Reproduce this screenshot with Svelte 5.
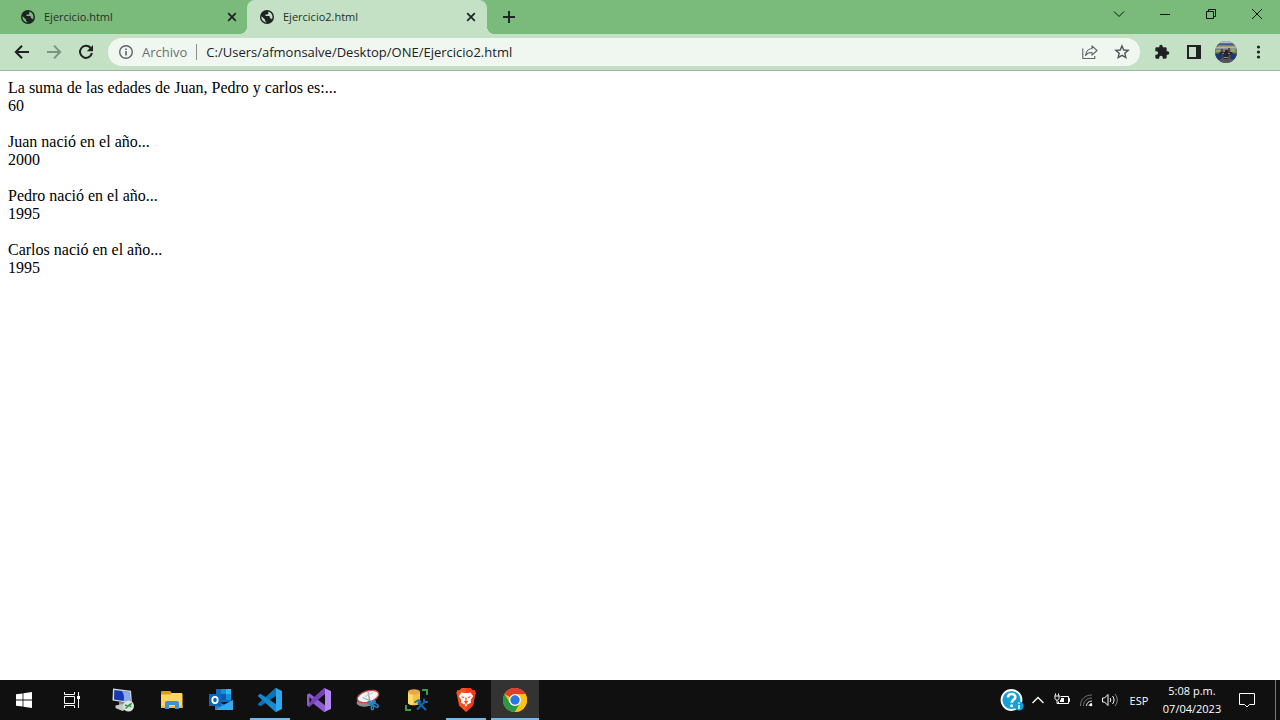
<script>
  const tabs = [
    { title: 'Ejercicio.html', active: false },
    { title: 'Ejercicio2.html', active: true }
  ];
  const results = [
    { label: 'La suma de las edades de Juan, Pedro y carlos es:...', value: 60 },
    { label: 'Juan nació en el año...', value: 2000 },
    { label: 'Pedro nació en el año...', value: 1995 },
    { label: 'Carlos nació en el año...', value: 1995 }
  ];
  let url = $state('C:/Users/afmonsalve/Desktop/ONE/Ejercicio2.html');
</script>

<div class="screen">
  <header class="titlebar">
    <nav class="tabs" aria-label="Pestañas">
      {#each tabs as tab}
        <div class="tab" class:active={tab.active}>
          <svg class="favicon" viewBox="0 0 16 16" width="16" height="16" aria-hidden="true">
            <circle cx="8" cy="8" r="7" fill="#202124" />
            <path
              d="M9.300 2.600c2.500.6 4.200 2.800 4.200 5.400 0 .9-.2 1.700-.6 2.400-.3-.7-.9-1.100-1.600-1.100h-.5V8c0-.6-.4-1-1-1H6.500V5.500H8c.7 0 1.300-.6 1.300-1.300zM2.600 7.300l3.400 3.300v.6c0 .8.5 1.400 1.300 1.400v.9C4.500 13.100 2.400 10.800 2.400 8z"
              fill={tab.active ? '#c5e1c5' : '#7aba7b'}
            />
          </svg>
          <a class="tab-title" href="#app">{tab.title}</a>
          <button class="tab-close" aria-label="Cerrar pestaña">
            <svg viewBox="0 0 16 16" width="16" height="16">
              <path d="M4.200 4.200l7.600 7.600M11.800 4.200l-7.600 7.600" stroke="#202124" stroke-width="1.700" />
            </svg>
          </button>
        </div>
      {/each}
      <button class="new-tab" aria-label="Nueva pestaña">
        <svg viewBox="0 0 16 16" width="16" height="16">
          <path d="M8 2v12M2 8h12" stroke="#202124" stroke-width="1.900" />
        </svg>
      </button>
    </nav>
    <div class="window-controls">
      <button aria-label="Buscar pestañas">
        <svg viewBox="0 0 12 12" width="12" height="12"><path d="M1 3.500l5 5 5-5" /></svg>
      </button>
      <button aria-label="Minimizar">
        <svg viewBox="0 0 12 12" width="12" height="12"><path d="M1 6.500h10" /></svg>
      </button>
      <button aria-label="Restaurar">
        <svg viewBox="0 0 12 12" width="12" height="12"><path d="M1.500 3.500h7v7h-7zM3.500 3.500v-2h7v7h-2" /></svg>
      </button>
      <button aria-label="Cerrar">
        <svg viewBox="0 0 12 12" width="12" height="12"><path d="M1 1l10 10M11 1L1 11" /></svg>
      </button>
    </div>
  </header>

  <div class="toolbar">
    <button class="tool" aria-label="Atrás">
      <svg viewBox="0 0 16 16" width="16" height="16"><path d="M15 8H2.500M8 1.700L1.800 8 8 14.300" fill="none" stroke="#202124" stroke-width="2" /></svg>
    </button>
    <button class="tool" aria-label="Adelante">
      <svg viewBox="0 0 16 16" width="16" height="16"><path d="M1 8h12.500M8 1.700L14.200 8 8 14.300" fill="none" stroke="#7f917f" stroke-width="1.900" /></svg>
    </button>
    <button class="tool" aria-label="Recargar">
      <svg viewBox="0 0 16 16" width="16" height="16">
        <path d="M12.600 4A6 6 0 1 0 13.900 9" fill="none" stroke="#202124" stroke-width="2" />
        <path d="M15 1v6.200H8.800z" fill="#202124" />
      </svg>
    </button>
    <div class="omnibox">
      <button class="site-info" aria-label="Información del sitio">
        <svg viewBox="0 0 16 16" width="16" height="16">
          <circle cx="8" cy="8" r="6.300" fill="none" stroke="#5f6368" stroke-width="1.400" />
          <path d="M8 7v4.500M8 4.400v1.600" stroke="#5f6368" stroke-width="1.600" />
        </svg>
      </button>
      <label class="scheme" for="url">Archivo</label>
      <input id="url" type="text" bind:value={url} spellcheck="false" />
      <button class="tool" aria-label="Compartir">
        <svg viewBox="0 0 16 16" width="16" height="16" fill="none" stroke="#5f6368" stroke-width="1.100">
          <path d="M.8 4.500v10h12V12" />
          <path d="M10 1.800l5 4.700-5 4.700V8.500C7 8.300 5 9.300 3.500 11.500 4 7.500 6.500 4.800 10 4.500z" stroke-linejoin="round" />
        </svg>
      </button>
      <button class="tool" aria-label="Agregar a favoritos">
        <svg viewBox="0 0 16 16" width="16" height="16">
          <path d="M8 1.900l1.750 4.100 4.450.4-3.370 2.930 1 4.350L8 11.400l-3.830 2.280 1-4.350L1.800 6.400l4.450-.4z" fill="none" stroke="#505458" stroke-width="1.400" />
        </svg>
      </button>
    </div>
    <button class="tool" aria-label="Extensiones">
      <svg viewBox="0 0 24 24" width="16" height="16">
        <path d="M20.500 11H19V7c0-1.100-.9-2-2-2h-4V3.500a2.500 2.500 0 0 0-5 0V5H4c-1.100 0-2 .9-2 2v3.800h1.500a2.700 2.700 0 0 1 0 5.400H2V20c0 1.100.9 2 2 2h3.800v-1.500a2.700 2.700 0 0 1 5.400 0V22H17c1.100 0 2-.9 2-2v-4h1.500a2.500 2.500 0 0 0 0-5z" fill="#202124" />
      </svg>
    </button>
    <button class="tool" aria-label="Panel lateral">
      <svg viewBox="0 0 16 16" width="16" height="16">
        <path d="M1 1h14v14H1z" fill="#202124" /><path d="M3 3h7v10H3z" fill="#c5e1c5" />
      </svg>
    </button>
    <button class="tool" aria-label="Perfil">
      <svg viewBox="0 0 22 22" width="22" height="22">
        <defs><clipPath id="avatar"><circle cx="11" cy="11" r="11" /></clipPath></defs>
        <g clip-path="url(#avatar)">
          <path d="M0 0h22v22H0z" fill="#565a60" />
          <path d="M0 0h22v2.500H0z" fill="#aebdd0" />
          <path d="M0 2.500h22v2H0z" fill="#3b5a9a" />
          <path d="M3 4.500h17v1.300H3z" fill="#c0a650" />
          <path d="M0 5.800h22v2H0z" fill="#a9b4c2" />
          <path d="M0 7.800h22v4H0z" fill="#77807a" />
          <path d="M1 9h4v2H1zM16 8h4v3h-4z" fill="#91a94e" />
          <path d="M6 8h2v3H6zM13 7h2v4h-2z" fill="#5b453b" />
          <path d="M0 13h6l2 3-3 3H0zM16 13h6v6h-6l-1-3z" fill="#1b3a70" />
          <path d="M5 11h5V9h3v2h4l1 2-4 1-1 4H9l-1-4-4-1z" fill="#26252c" />
          <path d="M5 18h13v4H5z" fill="#55565d" />
          <path d="M7 12h2v1H7zM13 12h2v1h-2zM9 16h4v1H9z" fill="#a98279" />
        </g>
      </svg>
    </button>
    <button class="tool" aria-label="Menú">
      <svg viewBox="0 0 16 16" width="16" height="16" fill="#202124">
        <circle cx="8.500" cy="3" r="1.600" /><circle cx="8.500" cy="8" r="1.600" /><circle cx="8.500" cy="13" r="1.600" />
      </svg>
    </button>
  </div>

  <main>
    {#each results as row}
      <p>{row.label}<br />{row.value}</p>
    {/each}
  </main>

  <footer class="taskbar">
    <button class="task" aria-label="Inicio">
      <svg viewBox="0 0 16 16" width="16" height="16" fill="#fff">
        <path d="M0 2.300l6.600-.9v6.200H0zM7.400 1.300L16 0v7.600H7.400zM0 8.400h6.600v6.200L0 13.700zM7.400 8.400H16V16l-8.600-1.200z" />
      </svg>
    </button>
    <button class="task" aria-label="Vista de tareas">
      <svg viewBox="0 0 16 16" width="16" height="16" fill="none" stroke="#fff">
        <path d="M.5 0v2.500h10V0M.5 4.500h10v7H.5zM.5 16v-2.500h10V16M14.500 0v16" />
        <path d="M13 4h3v3h-3z" fill="#fff" stroke="none" />
      </svg>
    </button>
    <div class="apps">
      <button class="task" aria-label="Escritorio remoto">
        <svg viewBox="0 0 24 24" width="24" height="24">
          <path d="M2 .5l18 2.200 1 12.800-19.500-3z" fill="#d5dad9" />
          <path d="M3.300 2l15.500 2 .7 10L3 11.500z" fill="#1638b8" />
          <path d="M11 3l7.800 1 .7 10-7-1.100C13.500 9.500 13 6.500 11 3z" fill="#8aaaf0" />
          <path d="M8 13.500l6 1v4l-6-1z" fill="#8b9190" />
          <path d="M4.500 17.500l7-1.500 3 5.500-3 1.500-7-3z" fill="#c5c9c7" />
          <circle cx="17.500" cy="18" r="5.500" fill="#e0e4df" />
          <path d="M14 17l3 1.300-2.500 2.200M20.800 15.300l-3 2 2.500 1.500" fill="none" stroke="#2f9442" stroke-width="1.500" />
        </svg>
      </button>
      <button class="task" aria-label="Explorador de archivos">
        <svg viewBox="0 0 24 24" width="24" height="24">
          <path d="M1 4.500c0-.8.400-1.500 1.200-1.500h8l1.500 2H22v3H1z" fill="#e39b0b" />
          <path d="M1 6.500h9l2-1.500h9c.8 0 1.500.500 1.500 1.300V20H1z" fill="#ffd561" />
          <path d="M1 18h21.500v2H1z" fill="#f1bf40" />
          <path d="M5 21v-6c0-1.200.7-2 2-2h10c1.200 0 2 .8 2 2v6h-4v-4H9v4z" fill="#3d91d9" />
        </svg>
      </button>
      <button class="task" aria-label="Outlook">
        <svg viewBox="0 0 24 24" width="24" height="24">
          <path d="M7 1h15v13H7z" fill="#0f6cbd" />
          <path d="M12 1h5v5h-5z" fill="#1490df" /><path d="M17 1h5v5h-5z" fill="#35b8f1" />
          <path d="M12 6h5v6h-5z" fill="#0a5ca8" /><path d="M17 6h5v6h-5z" fill="#1490df" />
          <path d="M6 12l9 4.500 9-4.500v10H6z" fill="#1a82d5" />
          <path d="M6 22h18V12z" fill="#38a9e8" />
          <path d="M0 6h12v12H0z" fill="#0868bd" />
          <ellipse cx="6" cy="12" rx="2.700" ry="3.100" fill="none" stroke="#fff" stroke-width="1.800" />
        </svg>
      </button>
      <button class="task running" aria-label="Visual Studio Code">
        <svg viewBox="0 0 24 24" width="24" height="24">
          <path d="M0 15.700L17.500 0 20 6.500 2.400 18.200 0 16.800z" fill="#0873b8" />
          <path d="M0 8.300L.2 7.300 2.400 5.800 20 17.500 17.500 24 0 8.300z" fill="#1689d1" />
          <path d="M17.200.3L18 0l6 3v18l-6 3-.8-.3.800-1.200v-21z" fill="#2ea7ed" />
        </svg>
      </button>
      <button class="task" aria-label="Visual Studio">
        <svg viewBox="0 0 24 24" width="24" height="24">
          <path d="M0 6.500l2.500-1.300L19 18v5.500L17 24 5 14.500 2.500 18.800 0 17.500zM2.500 9v6l3-3z" fill="#8e5bd0" fill-rule="evenodd" />
          <path d="M1 18.500l1.500.300L18 6V0l-1.200.300L5 11z" fill="#7542b8" />
          <path d="M17 0l7 3v18l-7 3 1-1.500v-21z" fill="#b488f3" />
        </svg>
      </button>
      <button class="task" aria-label="Recortes">
        <svg viewBox="0 0 24 24" width="24" height="24">
          <ellipse cx="10" cy="14" rx="9.500" ry="4.500" fill="#8c8c8c" transform="rotate(-8 10 14)" />
          <ellipse cx="12" cy="8.500" rx="11" ry="5.500" fill="#f5f5f5" stroke="#d24447" stroke-width="1.300" transform="rotate(-17 12 8.500)" />
          <path d="M12 4l2 10M6.500 9.500l9.500 4" fill="none" stroke="#a2a6a6" stroke-width="1.300" />
          <path d="M9 8.500l8-4" fill="none" stroke="#c2c5c5" />
          <path d="M16 15.500c-2.500-3.500-5.500-1.500-3.500.3 1.300 1.100 3.500-.3 3.500-.3s-2 6 .3 6.300c2 .2 1-4.300-.3-6.300 1.800 1.500 3.500 4.800 5.800 3.500 2-1.500-2.300-4.500-5.800-3.500 1.500-.2 4-1.300 3-2.500-1-1-2.500 1-3 2.500z" fill="none" stroke="#2385bf" stroke-width="1.500" />
        </svg>
      </button>
      <button class="task" aria-label="Herramientas de base de datos">
        <svg viewBox="0 0 24 24" width="24" height="24">
          <path d="M3 4v11c0 3 12 3 12 0V4z" fill="#f6c33b" />
          <path d="M3 4v11c0 1 2 1.800 5 2.200V5z" fill="#ffdd62" />
          <ellipse cx="9" cy="4" rx="6" ry="2.700" fill="#eca64a" />
          <path d="M17 2h5v5M1 17v5h5" fill="none" stroke="#379c4b" stroke-width="2" />
          <path d="M12 21.500l8-8M13 14l8 8" fill="none" stroke="#1768aa" stroke-width="2" />
          <path d="M9.500 14.500l4-2.500 2 1.500-2.500 3M19 10.500v3.500h4" fill="none" stroke="#1768aa" stroke-width="1.800" />
        </svg>
      </button>
      <button class="task running" aria-label="Brave">
        <svg viewBox="0 0 24 24" width="24" height="24">
          <path d="M7.500 0h9l2 2.300 2-.2 1.200 3L21 7l-2 10.500L12 24l-7-6.500L3 7l-.7-1.900 1.200-3 2 .2z" fill="#f4511e" />
          <path d="M12 0h4.500l2 2.300 2-.2 1.200 3L21 7l-2 10.500L12 24z" fill="#ef3d16" />
          <path d="M7.500 4.500l2.700.5h3.600l2.700-.5 2.700 3.700-2.600 3.800.5 2.500-3.300 2-1.800 2.200-1.800-2.200-3.300-2 .5-2.500L4.800 8.200z" fill="#fff" />
          <path d="M7 8.300l3.500.7-1.500 1.300zM17 8.300l-3.500.7 1.500 1.300zM11.300 9.500h1.400l-.3 3 1.800 1.300L12 15.300l-2.200-1.500 1.800-1.300z" fill="#ef451b" />
          <path d="M9.500 17l2.500-1.600 2.500 1.600" fill="none" stroke="#ef451b" stroke-width=".8" />
        </svg>
      </button>
      <button class="task current" aria-label="Google Chrome">
        <svg viewBox="0 0 24 24" width="24" height="24">
          <circle cx="12" cy="12" r="12" fill="#fbc116" />
          <path d="M12 12L1.600 6A12 12 0 0 1 22.400 6z" fill="#e33b2e" />
          <path d="M1.600 6A12 12 0 0 0 12 24l5.200-9L12 12 6.800 15z" fill="#269a48" />
          <path d="M12 6h10.400A12 12 0 0 1 12 24l5.200-9z" fill="#fbc116" />
          <circle cx="12" cy="12" r="6" fill="#fff" /><circle cx="12" cy="12" r="4.700" fill="#2878e4" />
        </svg>
      </button>
    </div>

    <div class="tray">
      <button class="tray-help" aria-label="Ayuda">
        <svg viewBox="0 0 24 24" width="24" height="24">
          <circle cx="11.500" cy="12" r="10" fill="#16a0d8" stroke="#fff" stroke-width="1.800" />
          <path d="M8 9.500c0-4.700 7.300-4.300 7.300-.5 0 2.700-3.600 2.700-3.600 5.700" fill="none" stroke="#fff" stroke-width="2.600" />
          <circle cx="11.700" cy="17.800" r="1.500" fill="#fff" />
          <circle cx="19" cy="18" r="4.600" fill="#16a0d8" />
          <path d="M19 17v4M19 14.300v1.500" stroke="#fff" stroke-width="1.500" />
        </svg>
      </button>
      <button class="tray-icon" aria-label="Mostrar iconos ocultos">
        <svg viewBox="0 0 16 16" width="16" height="16"><path d="M2.500 11L8 5.500l5.500 5.500" fill="none" stroke="#fff" stroke-width="1.300" /></svg>
      </button>
      <button class="tray-icon" aria-label="Batería">
        <svg viewBox="0 0 16 16" width="16" height="16" fill="none" stroke="#fff">
          <path d="M6.500 4.500h8v7h-10V9.500M14.500 6.500h1v3h-1" /><path d="M7 6h3v4H6V8.500l1-1z" fill="#fff" stroke="none" />
          <path d="M1.500 1.500v2M4.500 1.500v2M0 4h6M1 4.500v2c0 1 1 1.500 2 1.500s2-.5 2-1.500v-2M3 8v3.500h2" />
        </svg>
      </button>
      <button class="tray-icon" aria-label="Red inalámbrica">
        <svg viewBox="0 0 16 16" width="16" height="16" fill="none">
          <path d="M2.500 14C2.500 7 7 3 14 3M5.500 14C5.500 9 9 6 14 6" stroke="#777" />
          <path d="M8.500 14c0-3 2-5 5.500-5M11 14c0-1.500 1-2.500 3-2.500" stroke="#ddd" />
          <circle cx="13" cy="13" r="1.300" fill="#fff" />
        </svg>
      </button>
      <button class="tray-icon" aria-label="Volumen">
        <svg viewBox="0 0 16 16" width="16" height="16" fill="none" stroke="#fff">
          <path d="M.5 6h2L6 2.500v11L2.500 10h-2zM8 6c1 1.200 1 2.800 0 4M10.500 4c2 2.500 2 5.500 0 8" /><path d="M13 2c3 3.700 3 8.300 0 12" stroke="#888" />
        </svg>
      </button>
      <button class="language">ESP</button>
      <button class="clock"><time datetime="2023-04-07T17:08">5:08 p.m.<br />07/04/2023</time></button>
      <button class="notifications" aria-label="Centro de actividades">
        <svg viewBox="0 0 16 16" width="16" height="16"><path d="M.5 1.500h15v11h-5L8 15l-2.500-2.500h-5z" fill="none" stroke="#fff" /></svg>
      </button>
      <button class="show-desktop" aria-label="Mostrar escritorio"></button>
    </div>
  </footer>
</div>

<style>
  :global(body) { margin: 0; }
  .screen {
    display: flex;
    flex-direction: column;
    min-height: 100vh;
    background: #fff;
    font-family: "Open Sans", "Noto Sans", sans-serif;
  }
  button {
    display: flex;
    align-items: center;
    justify-content: center;
    flex: none;
    padding: 0;
    border: 0;
    background: none;
    color: inherit;
    font: inherit;
  }
  svg { display: block; flex: none; }
  .titlebar {
    display: flex;
    justify-content: space-between;
    height: 34px;
    background: #7aba7b;
  }
  .tabs { display: flex; flex: 1; min-width: 0; padding-left: 8px; }
  .tab {
    position: relative;
    display: flex;
    align-items: center;
    box-sizing: border-box;
    flex: 0 1 240px;
    min-width: 0;
    padding: 0 8px 0 12px;
    border-radius: 8px 8px 0 0;
  }
  .tab + .tab { margin-left: -1px; }
  .tab.active { background: #c5e1c5; }
  .tab.active::before,
  .tab.active::after {
    content: "";
    position: absolute;
    bottom: 0;
    width: 8px;
    height: 8px;
  }
  .tab.active::before { right: 100%; background: radial-gradient(circle at 0 0, transparent 8px, #c5e1c5 8px); }
  .tab.active::after { left: 100%; background: radial-gradient(circle at 100% 0, transparent 8px, #c5e1c5 8px); }
  .tab-title {
    flex: 1;
    min-width: 0;
    margin-left: 8px;
    overflow: hidden;
    color: #263027;
    font-size: 11px;
    line-height: 16px;
    text-decoration: none;
    white-space: nowrap;
  }
  .new-tab { width: 28px; margin-left: 8px; }
  .window-controls { display: flex; height: 28px; }
  .window-controls button { width: 46px; }
  .window-controls path { fill: none; stroke: #111; }
  .toolbar {
    display: flex;
    align-items: center;
    box-sizing: border-box;
    height: 37px;
    padding: 0 6px;
    border-bottom: 1px solid #9fb59f;
    background: #c5e1c5;
  }
  .tool { width: 32px; height: 28px; }
  .omnibox {
    display: flex;
    align-items: center;
    flex: 1;
    min-width: 0;
    height: 28px;
    margin: 0 6px;
    padding: 0 2px 0 10px;
    border-radius: 14px;
    background: #f0f7f0;
    font-size: 13px;
    line-height: 16px;
  }
  .scheme {
    margin-left: 8px;
    padding-right: 9px;
    border-right: 1px solid #8b918d;
    color: #6b7072;
  }
  input {
    flex: 1;
    min-width: 0;
    padding: 0 0 0 9px;
    border: 0;
    outline: 0;
    background: none;
    color: #202124;
    font: inherit;
  }
  main {
    flex: 1;
    padding: 8px;
    color: #000;
    font: 16px/18px "Liberation Serif", serif;
  }
  p { margin: 0 0 18px; }
  .taskbar {
    display: flex;
    height: 40px;
    background: #101010;
    color: #fff;
    font-size: 11px;
  }
  .task { position: relative; width: 48px; }
  .apps { display: flex; gap: 1px; margin-left: 3px; }
  .current { background: #333; }
  .running::after,
  .current::after {
    content: "";
    position: absolute;
    bottom: 0;
    left: 4px;
    right: 4px;
    height: 2px;
    background: #76b9ed;
  }
  .current::after { left: 0; right: 0; }
  .tray { display: flex; margin-left: auto; }
  .tray-help { width: 28px; }
  .tray-icon { width: 24px; }
  .language { width: 34px; }
  .clock { width: 72px; line-height: 18px; text-align: center; }
  .notifications { width: 38px; }
  .show-desktop { width: 5px; margin-left: 9px; border-left: 1px solid #777; }
</style>
